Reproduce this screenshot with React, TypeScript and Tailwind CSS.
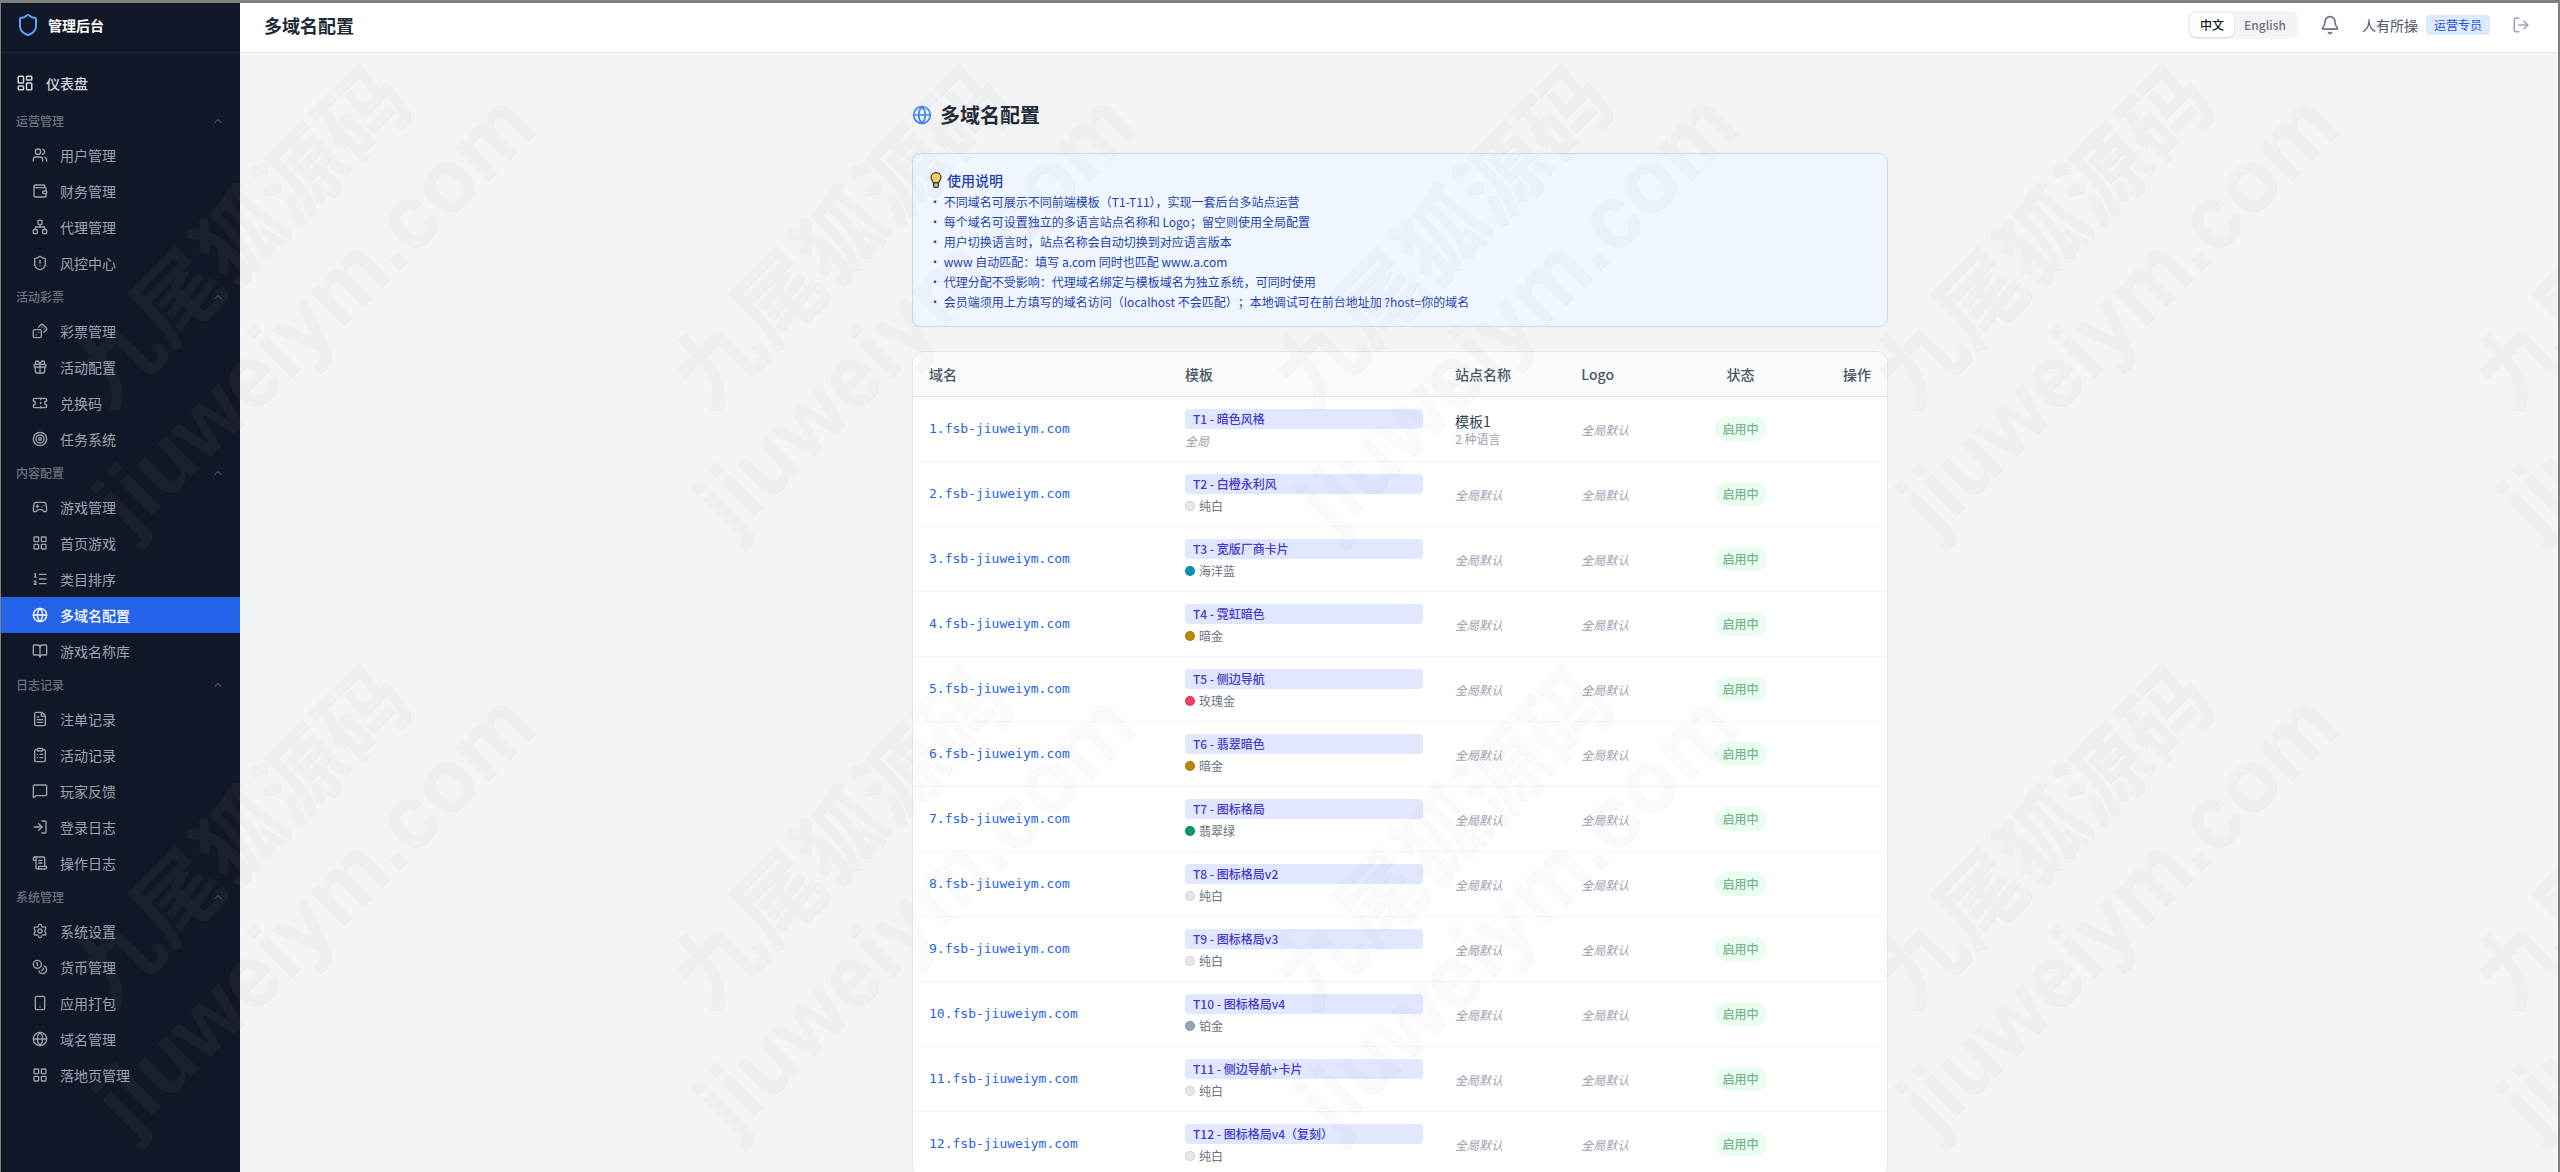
import React from "react";
import {
  Bell, BookOpen, ChevronUp, ClipboardList, Coins, Dices, FileText, Gamepad2, Gift, Globe,
  LayoutDashboard, LayoutGrid, ListOrdered, LogIn, LogOut, MessageSquare, Network, ScrollText,
  Settings, Shield, ShieldAlert, Smartphone, Target, Ticket, Users, Wallet,
} from "lucide-react";
import type { LucideIcon } from "lucide-react";

type Item = { label: string; icon: LucideIcon; active?: boolean };
type Group = { title: string; items: Item[] };

const groups: Group[] = [
  {
    title: "运营管理",
    items: [
      { label: "用户管理", icon: Users },
      { label: "财务管理", icon: Wallet },
      { label: "代理管理", icon: Network },
      { label: "风控中心", icon: ShieldAlert },
    ],
  },
  {
    title: "活动彩票",
    items: [
      { label: "彩票管理", icon: Dices },
      { label: "活动配置", icon: Gift },
      { label: "兑换码", icon: Ticket },
      { label: "任务系统", icon: Target },
    ],
  },
  {
    title: "内容配置",
    items: [
      { label: "游戏管理", icon: Gamepad2 },
      { label: "首页游戏", icon: LayoutGrid },
      { label: "类目排序", icon: ListOrdered },
      { label: "多域名配置", icon: Globe, active: true },
      { label: "游戏名称库", icon: BookOpen },
    ],
  },
  {
    title: "日志记录",
    items: [
      { label: "注单记录", icon: FileText },
      { label: "活动记录", icon: ClipboardList },
      { label: "玩家反馈", icon: MessageSquare },
      { label: "登录日志", icon: LogIn },
      { label: "操作日志", icon: ScrollText },
    ],
  },
  {
    title: "系统管理",
    items: [
      { label: "系统设置", icon: Settings },
      { label: "货币管理", icon: Coins },
      { label: "应用打包", icon: Smartphone },
      { label: "域名管理", icon: Globe },
      { label: "落地页管理", icon: LayoutGrid },
    ],
  },
];

const tips = [
  "不同域名可展示不同前端模板（T1-T11），实现一套后台多站点运营",
  "每个域名可设置独立的多语言站点名称和 Logo；留空则使用全局配置",
  "用户切换语言时，站点名称会自动切换到对应语言版本",
  "www 自动匹配：填写 a.com 同时也匹配 www.a.com",
  "代理分配不受影响：代理域名绑定与模板域名为独立系统，可同时使用",
  "会员端须用上方填写的域名访问（localhost 不会匹配）；本地调试可在前台地址加 ?host=你的域名",
];

type Row = { template: string; theme?: string; dot?: string; name?: string; languages?: number };

const rows: Row[] = [
  { template: "T1 - 暗色风格", name: "模板1", languages: 2 },
  { template: "T2 - 白橙永利风", theme: "纯白", dot: "bg-[#e5e7eb]" },
  { template: "T3 - 宽版厂商卡片", theme: "海洋蓝", dot: "bg-[#0891b2]" },
  { template: "T4 - 霓虹暗色", theme: "暗金", dot: "bg-[#b8860b]" },
  { template: "T5 - 侧边导航", theme: "玫瑰金", dot: "bg-[#f43f5e]" },
  { template: "T6 - 翡翠暗色", theme: "暗金", dot: "bg-[#b8860b]" },
  { template: "T7 - 图标格局", theme: "翡翠绿", dot: "bg-[#059669]" },
  { template: "T8 - 图标格局v2", theme: "纯白", dot: "bg-[#e5e7eb]" },
  { template: "T9 - 图标格局v3", theme: "纯白", dot: "bg-[#e5e7eb]" },
  { template: "T10 - 图标格局v4", theme: "铂金", dot: "bg-[#94a3b8]" },
  { template: "T11 - 侧边导航+卡片", theme: "纯白", dot: "bg-[#e5e7eb]" },
  { template: "T12 - 图标格局v4（复刻）", theme: "纯白", dot: "bg-[#e5e7eb]" },
];

function Sidebar() {
  return (
    <aside className="flex w-60 shrink-0 flex-col bg-[#111827]">
      <div className="flex h-[53px] items-center gap-2 border-b border-[#1f2937] px-4 pb-[3px]">
        <Shield className="size-6 text-[#60a5fa]" />
        <span className="text-sm font-bold text-white">管理后台</span>
      </div>
      <nav className="py-3">
        <a href="#dashboard" className="mb-1 flex h-9 items-center gap-3 px-4 text-sm font-medium text-[#d1d5db]">
          <LayoutDashboard className="size-[18px]" />
          仪表盘
        </a>
        {groups.map((group) => (
          <section key={group.title}>
            <button type="button" className="flex h-8 w-full items-center justify-between px-4 text-xs font-medium text-[#6b7280]">
              {group.title}
              <ChevronUp className="size-3" />
            </button>
            {group.items.map(({ label, icon: Icon, active }) => (
              <a
                key={label}
                href={`#${label}`}
                aria-current={active ? "page" : undefined}
                className={
                  active
                    ? "flex h-9 items-center gap-3 bg-[#2563eb] pl-8 text-sm font-medium text-white"
                    : "flex h-9 items-center gap-3 pl-8 text-sm text-[#9ca3af]"
                }
              >
                <Icon className="size-4" />
                {label}
              </a>
            ))}
          </section>
        ))}
      </nav>
    </aside>
  );
}

function TopBar() {
  return (
    <header className="flex h-[53px] shrink-0 items-center justify-between border-b border-[#e5e7eb] bg-white px-6 pb-[3px]">
      <h1 className="text-lg font-semibold text-[#1f2937]">多域名配置</h1>
      <div className="flex items-center gap-4">
        <div className="flex rounded-lg bg-[#f3f4f6] p-0.5 text-xs font-medium">
          <button type="button" className="rounded-md bg-white px-2.5 py-1 text-[#111827] shadow-sm">中文</button>
          <button type="button" className="rounded-md px-2.5 py-1 text-[#6b7280]">English</button>
        </div>
        <button type="button" aria-label="通知" className="p-1.5 text-[#6b7280]">
          <Bell className="size-5" />
        </button>
        <div className="flex items-center gap-2">
          <span className="text-sm text-[#4b5563]">人有所操</span>
          <span className="rounded bg-[#dbeafe] px-2 py-0.5 text-xs text-[#1d4ed8]">运营专员</span>
        </div>
        <button type="button" aria-label="退出" className="p-1.5 text-[#9ca3af]">
          <LogOut className="size-[18px]" />
        </button>
      </div>
    </header>
  );
}

function Bulb() {
  return (
    <svg aria-hidden="true" viewBox="0 0 16 16" className="size-4">
      <path
        d="M7 .7C4 .7 2 2.8 2 5.6c0 2.200 1.900 3.300 2.300 5.200h5.400c.4-1.900 2.300-3 2.300-5.200C12 2.800 10 .7 7 .7Z"
        fill="#fccc63"
        stroke="#3a3222"
        strokeWidth="1.2"
      />
      <path d="M4.600 11h4.800v3.200c0 .7-.6 1.200-1.300 1.200H5.900c-.7 0-1.300-.5-1.300-1.200Z" fill="#b9b9b9" stroke="#333" strokeWidth="1.200" />
    </svg>
  );
}

function DomainTable() {
  const fallback = <span className="text-xs text-[#9ca3af] italic">全局默认</span>;
  return (
    <div className="overflow-hidden rounded-xl border border-[#e5e7eb] bg-white">
      <table className="w-full text-sm">
        <thead className="border-b border-[#e5e7eb] bg-[#f9fafb] text-[#4b5563]">
          <tr>
            <th className="w-64 px-4 py-3 text-left font-medium">域名</th>
            <th className="px-4 py-3 text-left font-medium">模板</th>
            <th className="px-4 py-3 text-left font-medium">站点名称</th>
            <th className="px-4 py-3 text-left font-medium">Logo</th>
            <th className="px-4 py-3 text-center font-medium">状态</th>
            <th className="px-4 py-3 text-right font-medium">操作</th>
          </tr>
        </thead>
        <tbody>
          {rows.map((row, i) => (
            <tr key={row.template} className="border-b border-[#f3f4f6]">
              <td className="px-4 py-3 font-['DejaVu_Sans_Mono',monospace] text-[13px] text-[#2563eb]">
                {`${i + 1}.fsb-jiuweiym.com`}
              </td>
              <td className="px-4 py-3">
                <div className="flex flex-col gap-1 text-xs">
                  <span className="rounded bg-[#e0e7ff] px-2 py-0.5 font-medium text-[#4338ca]">{row.template}</span>
                  {row.theme ? (
                    <span className="flex items-center gap-1 text-[#6b7280]">
                      <span className={`size-2.5 rounded-full border border-black/10 ${row.dot}`} />
                      {row.theme}
                    </span>
                  ) : (
                    <span className="text-[#9ca3af] italic">全局</span>
                  )}
                </div>
              </td>
              <td className="px-4 py-3">
                {row.name ? (
                  <>
                    <div className="text-[#374151]">{row.name}</div>
                    <div className="text-xs text-[#9ca3af]">{row.languages} 种语言</div>
                  </>
                ) : (
                  fallback
                )}
              </td>
              <td className="px-4 py-3">{fallback}</td>
              <td className="px-4 py-3 text-center">
                <button type="button" className="rounded-full bg-[#dcfce7] px-2 py-1 text-xs font-medium text-[#15803d] opacity-60">
                  启用中
                </button>
              </td>
              <td className="px-4 py-3" />
            </tr>
          ))}
        </tbody>
      </table>
    </div>
  );
}

function Watermark() {
  return (
    <svg aria-hidden="true" className="pointer-events-none fixed inset-0 h-full w-full">
      <defs>
        <filter id="emboss" x="0" y="0" width="601" height="600" filterUnits="userSpaceOnUse" colorInterpolationFilters="sRGB">
          <feOffset in="SourceAlpha" dx="1" dy="1" result="shifted" />
          <feComposite in="shifted" in2="SourceAlpha" operator="out" result="rim" />
          <feFlood floodColor="#000000" floodOpacity="0.04" />
          <feComposite in2="rim" operator="in" result="edge" />
          <feFlood floodColor="#afafaf" floodOpacity="0.06" />
          <feComposite in2="SourceAlpha" operator="in" result="face" />
          <feMerge>
            <feMergeNode in="edge" />
            <feMergeNode in="face" />
          </feMerge>
        </filter>
        <pattern id="mark" width="601" height="600" patternUnits="userSpaceOnUse">
          <g fontWeight="700" filter="url(#emboss)">
            <text transform="translate(108 412) rotate(-45)" fontSize="87" fontFamily="'Noto Sans CJK SC', sans-serif">
              九尾狐源码
            </text>
            <text transform="translate(131 537) rotate(-45)" fontSize="88" fontFamily="'Liberation Sans', sans-serif">
              jiuweiym.com
            </text>
          </g>
        </pattern>
      </defs>
      <rect width="100%" height="100%" fill="url(#mark)" />
    </svg>
  );
}

export default function App() {
  return (
    <div className="flex h-screen overflow-hidden bg-[#f3f4f6] font-['Noto_Sans_CJK_SC',sans-serif]">
      <Sidebar />
      <div className="flex min-w-0 flex-1 flex-col">
        <TopBar />
        <main className="flex-1 overflow-hidden p-6">
          <div className="mx-auto max-w-5xl p-6">
            <h2 className="mb-6 flex items-center gap-2 text-xl font-bold text-[#1f2937]">
              <Globe className="size-5 text-[#3b82f6]" />
              多域名配置
            </h2>
            <div className="mb-6 rounded-lg border border-[#bfdbfe] bg-[#eff6ff] p-4 text-[#1e40af]">
              <p className="mb-1 flex items-center gap-0.5 text-sm font-medium">
                <Bulb />
                使用说明
              </p>
              <ul className="space-y-1 text-xs">
                {tips.map((tip) => (
                  <li key={tip} className="last:[text-spacing-trim:space-all]">• {tip}</li>
                ))}
              </ul>
            </div>
            <DomainTable />
          </div>
        </main>
      </div>
      <Watermark />
      <div className="pointer-events-none fixed inset-0 border-t-[3px] border-r-2 border-l border-[#808080]" />
    </div>
  );
}
